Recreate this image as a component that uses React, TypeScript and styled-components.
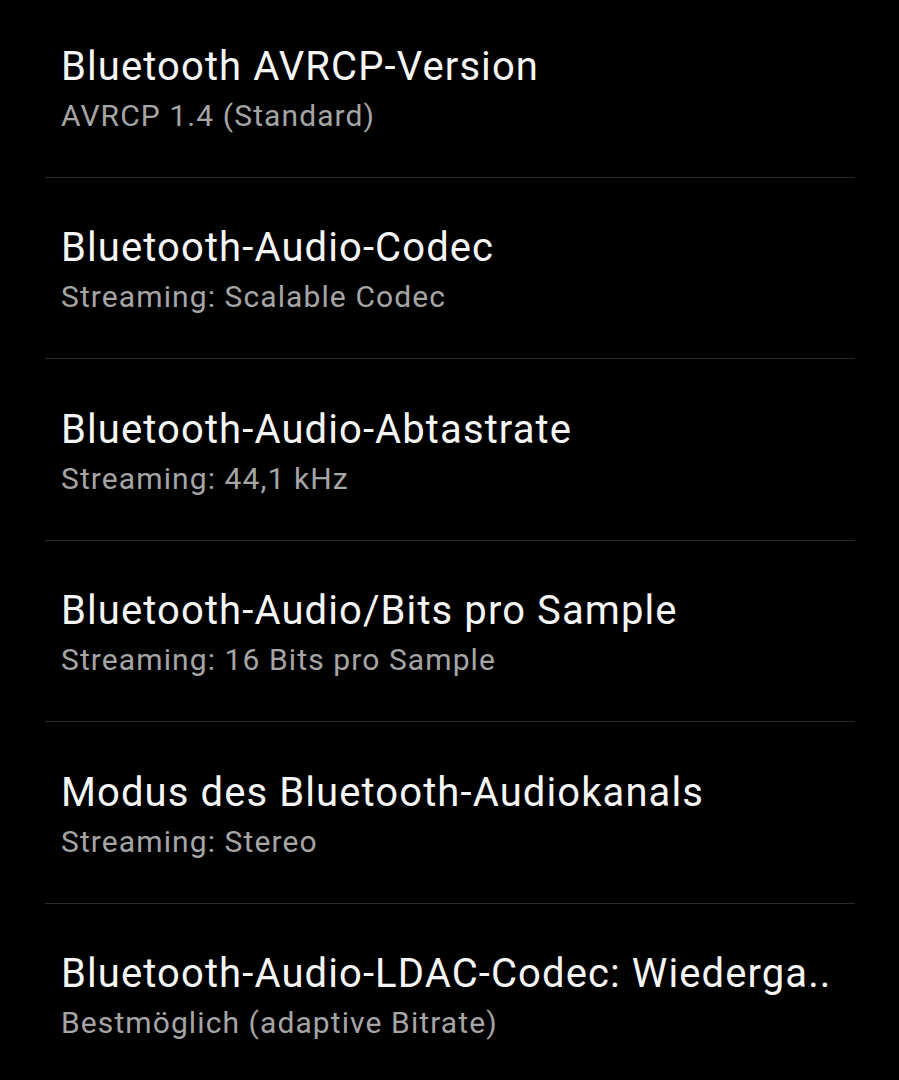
import React from 'react';
import styled, { createGlobalStyle } from 'styled-components';

const GlobalStyle = createGlobalStyle`
  html, body {
    margin: 0;
    padding: 0;
    background: #000;
  }
  body {
    font-family: Roboto, 'Noto Sans', sans-serif;
    overflow: hidden;
  }
`;

interface SettingItem {
  title: string;
  summary: string;
}

const items: SettingItem[] = [
  { title: 'Bluetooth AVRCP-Version', summary: 'AVRCP 1.4 (Standard)' },
  { title: 'Bluetooth-Audio-Codec', summary: 'Streaming: Scalable Codec' },
  { title: 'Bluetooth-Audio-Abtastrate', summary: 'Streaming: 44,1 kHz' },
  { title: 'Bluetooth-Audio/Bits pro Sample', summary: 'Streaming: 16 Bits pro Sample' },
  { title: 'Modus des Bluetooth-Audiokanals', summary: 'Streaming: Stereo' },
  { title: 'Bluetooth-Audio-LDAC-Codec: Wiederga..', summary: 'Bestmöglich (adaptive Bitrate)' },
];

const App: React.FC = () => {
  return (
    <>
      <GlobalStyle />
      <Screen>
        <List>
          {items.map((item) => (
            <Row key={item.title}>
              <Title>{item.title}</Title>
              <Summary>{item.summary}</Summary>
            </Row>
          ))}
        </List>
      </Screen>
    </>
  );
};

const Screen = styled.div`
  width: 899px;
  height: 1080px;
  background: #000;
  overflow: hidden;
`;

const List = styled.div`
  display: flex;
  flex-direction: column;
  padding: 0 44px 0 45px;
`;

const Row = styled.div`
  display: flex;
  flex-direction: column;
  gap: 8px;
  padding: 47.5px 16px 43.1px;
  border-bottom: 1px solid #2a2a2a;
  &:first-child {
    padding-top: 43.5px;
  }
  &:last-child {
    border-bottom: none;
  }
`;

const Title = styled.div`
  color: #f5f5f5;
  font-size: 40px;
  line-height: 46px;
  letter-spacing: 1.1px;
  white-space: nowrap;
  overflow: hidden;
`;

const Summary = styled.div`
  color: #a5a5a5;
  font-size: 30px;
  line-height: 36px;
  letter-spacing: 1.1px;
  white-space: nowrap;
`;

export default App;
